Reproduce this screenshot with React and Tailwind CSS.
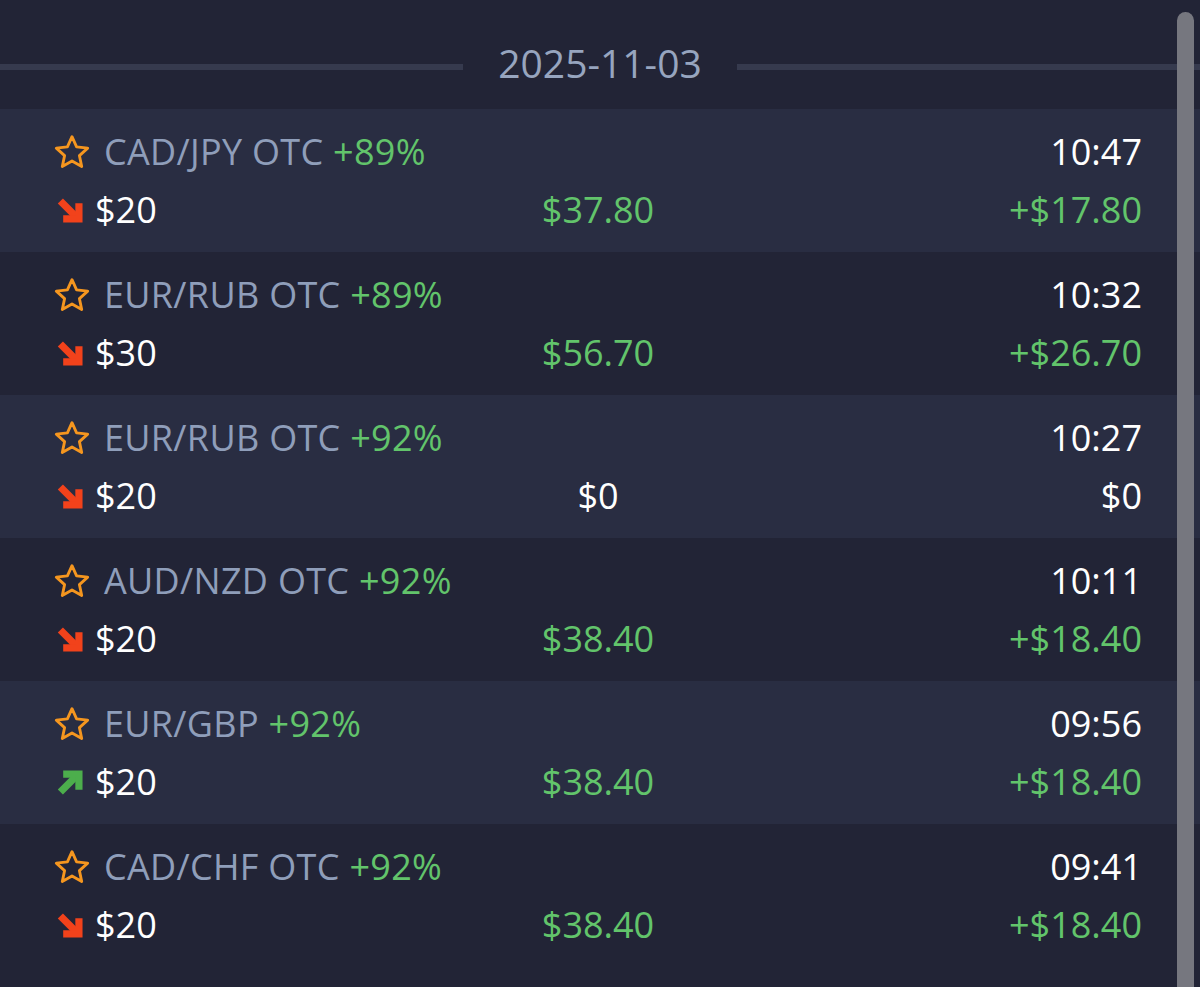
const trades = [
  { pair: "CAD/JPY OTC", pct: "+89%", time: "10:47", dir: "down", amount: "$20", payout: "$37.80", profit: "+$17.80" },
  { pair: "EUR/RUB OTC", pct: "+89%", time: "10:32", dir: "down", amount: "$30", payout: "$56.70", profit: "+$26.70" },
  { pair: "EUR/RUB OTC", pct: "+92%", time: "10:27", dir: "down", amount: "$20", payout: "$0", profit: "$0" },
  { pair: "AUD/NZD OTC", pct: "+92%", time: "10:11", dir: "down", amount: "$20", payout: "$38.40", profit: "+$18.40" },
  { pair: "EUR/GBP", pct: "+92%", time: "09:56", dir: "up", amount: "$20", payout: "$38.40", profit: "+$18.40" },
  { pair: "CAD/CHF OTC", pct: "+92%", time: "09:41", dir: "down", amount: "$20", payout: "$38.40", profit: "+$18.40" },
];

const StarIcon = () => (
  <svg width="36" height="36" viewBox="0 0 24 24" fill="none" className="shrink-0">
    <path
      d="M12 1.8L15.06 8.59 22.46 9.4 16.95 14.41 18.47 21.7 12 18 5.53 21.7 7.05 14.41 1.54 9.4 8.94 8.59z"
      stroke="#f5961f"
      strokeWidth="1.9"
      strokeLinejoin="round"
    />
  </svg>
);

const ArrowIcon = ({ dir }) => (
  <svg width="27" height="27" viewBox="0 0 24 24" fill="none" className="shrink-0">
    {dir === "down" ? (
      <g stroke="#f2421b" strokeWidth="6.4">
        <path d="M3 3.5l14 14" />
        <path d="M19.5 5.5v14H5.5" strokeLinejoin="miter" />
      </g>
    ) : (
      <g stroke="#4cae4c" strokeWidth="6.4">
        <path d="M3 20.5L17 6.5" />
        <path d="M5.5 4.5h14v14" strokeLinejoin="miter" />
      </g>
    )}
  </svg>
);

const profitColor = (v) => (v.startsWith("+") ? "text-[#62c46b]" : "text-white");

export default function App() {
  return (
    <div
      className="relative w-full h-[987px] overflow-hidden bg-[#222436] text-[36px]"
      style={{ fontFamily: '"Open Sans", "Noto Sans", sans-serif' }}
    >
      {/* date header */}
      <div className="flex items-center h-[109px] pt-[25px]">
        <div className="flex-1 h-[6px] bg-[#363a4e]" />
        <div className="w-[274px] text-center text-[39px] leading-none text-[#97a5bf] mb-[9px]">
          2025-11-03
        </div>
        <div className="flex-1 h-[6px] bg-[#363a4e]" />
      </div>

      {/* trades */}
      <div>
        {trades.map((t, i) => (
          <div
            key={i}
            className={`h-[143px] pl-[54px] pr-[58px] pt-[19px] flex flex-col gap-[10px] ${
              i % 2 === 0 ? "bg-[#292d42]" : "bg-[#222436]"
            }`}
          >
            <div className="flex items-center justify-between h-[48px] leading-[48px]">
              <div className="flex items-center gap-[14px]">
                <StarIcon />
                <span className="text-[#8f9eba] tracking-[0.3px]">
                  {t.pair} <span className="text-[#62c46b]">{t.pct}</span>
                </span>
              </div>
              <span className="text-white">{t.time}</span>
            </div>
            <div className="grid grid-cols-3 items-center h-[48px] leading-[48px]">
              <div className="flex items-center gap-[11px] pl-[3px]">
                <ArrowIcon dir={t.dir} />
                <span className="text-white">{t.amount}</span>
              </div>
              <div className={`text-center ${profitColor(t.profit)}`}>{t.payout}</div>
              <div className={`text-right ${profitColor(t.profit)}`}>{t.profit}</div>
            </div>
          </div>
        ))}
      </div>

      {/* scrollbar */}
      <div className="absolute right-[6px] top-[12px] bottom-0 w-[17px] rounded-t-full bg-[#76777f]" />
    </div>
  );
}
